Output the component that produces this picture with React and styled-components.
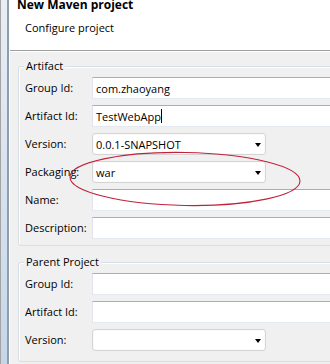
import styled, { createGlobalStyle } from "styled-components";

const Global = createGlobalStyle`
  html, body { margin: 0; padding: 0; }
  body {
    width: 330px;
    height: 364px;
    overflow: hidden;
    font-family: "Open Sans", "Noto Sans", sans-serif;
    font-size: 11px;
    color: #000;
  }
`;

const artifactRows = [
  { label: "Group Id:", value: "com.zhaoyang" },
  { label: "Artifact Id:", value: "TestWebApp", caret: true },
  { label: "Version:", value: "0.0.1-SNAPSHOT", combo: true },
  { label: "Packaging:", value: "war", combo: true },
  { label: "Name:", value: "" },
  { label: "Description:", value: "" },
];

const parentRows = [
  { label: "Group Id:", value: "" },
  { label: "Artifact Id:", value: "" },
  { label: "Version:", value: "", combo: true },
];

function FormRows({ rows }) {
  return (
    <Rows>
      {rows.map((r, i) => (
        <Row key={i}>
          <Label>{r.label}</Label>
          {r.combo ? (
            <Combo>
              <span>{r.value}</span>
              <Arrow />
            </Combo>
          ) : (
            <Field>
              {r.value}
              {r.caret && <Caret />}
            </Field>
          )}
        </Row>
      ))}
    </Rows>
  );
}

export default function App() {
  return (
    <Window>
      <Global />
      <Frame />
      <Main>
        <Header>
          <Title>New Maven project</Title>
          <Subtitle>Configure project</Subtitle>
        </Header>
        <Body>
          <Group>
            <Legend>Artifact</Legend>
            <FormRows rows={artifactRows} />
          </Group>
          <Group $last>
            <Legend>Parent Project</Legend>
            <FormRows rows={parentRows} />
          </Group>
        </Body>
      </Main>
      <Annotation width="330" height="364" viewBox="0 0 330 364">
        <ellipse
          cx="185"
          cy="179"
          rx="115"
          ry="26.5"
          transform="rotate(1 185 179)"
          fill="none"
          stroke="#c0223a"
          strokeWidth="1.1"
        />
      </Annotation>
    </Window>
  );
}

const Window = styled.div`
  position: relative;
  display: flex;
  width: 330px;
  height: 364px;
  overflow: hidden;
`;

const Frame = styled.div`
  width: 6px;
  flex-shrink: 0;
  border-left: 1px solid #a3a3a3;
  border-right: 2px solid #8d9cae;
  background: linear-gradient(#e9eef4, #c6d6e9);
`;

const Main = styled.div`
  flex: 1;
  display: flex;
  flex-direction: column;
  background: #f0f0f0;
  border-left: 1px solid #fff;
  min-width: 0;
  overflow: hidden;
`;

const Header = styled.div`
  height: 51px;
  box-sizing: border-box;
  background: #fff;
  border-bottom: 1px solid #a0a0a0;
  padding-left: 7px;
  flex-shrink: 0;
`;

const Title = styled.div`
  font-weight: bold;
  font-size: 12px;
  line-height: 14px;
  margin-top: -2px;
`;

const Subtitle = styled.div`
  line-height: 14px;
  margin-top: 9px;
  padding-left: 8px;
`;

const Body = styled.div`
  display: flex;
  flex-direction: column;
  gap: 16px;
  padding: 14px 0 0 8px;
  border-top: 1px solid #fff;
`;

const Group = styled.section`
  position: relative;
  width: 380px;
  flex-shrink: 0;
  box-sizing: border-box;
  padding: 10px 0 ${(p) => (p.$last ? "10px" : "6px")} 6px;
  border: 1px solid #d5dfe5;
  border-radius: 3px;
  box-shadow: inset 1px 1px 0 #fff;
`;

const Legend = styled.span`
  position: absolute;
  top: -8px;
  left: 5px;
  padding: 0 2px;
  line-height: 14px;
  background: #f0f0f0;
`;

const Rows = styled.div`
  display: flex;
  flex-direction: column;
  gap: 6px;
`;

const Row = styled.div`
  display: grid;
  grid-template-columns: 67px 1fr;
  align-items: center;
`;

const Label = styled.span`
  line-height: 14px;
  white-space: nowrap;
`;

const Field = styled.div`
  height: 22px;
  box-sizing: border-box;
  display: flex;
  align-items: center;
  padding: 0 3px;
  background: #fff;
  border: 1px solid #e3e9ef;
  border-top-color: #abadb3;
  border-left-color: #e2e3ea;
`;

const Caret = styled.span`
  display: inline-block;
  width: 1px;
  height: 14px;
  background: #000;
`;

const Combo = styled.div`
  width: 174px;
  height: 22px;
  box-sizing: border-box;
  display: flex;
  align-items: center;
  justify-content: space-between;
  padding: 0 4px 0 3px;
  background: #fff;
  border: 1px solid #d4d4d4;
  border-radius: 3px;
  box-shadow: inset 0 0 0 1px #fbfbfb;
`;

const Arrow = styled.span`
  width: 0;
  height: 0;
  border-left: 3.5px solid transparent;
  border-right: 3.5px solid transparent;
  border-top: 4px solid #000;
  margin-top: 1px;
`;

const Annotation = styled.svg`
  position: absolute;
  left: 0;
  top: 0;
  pointer-events: none;
`;
